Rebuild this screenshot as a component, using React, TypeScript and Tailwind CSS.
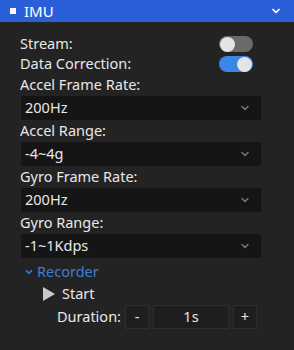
import { ChevronDown } from "lucide-react";

const font = { fontFamily: '"Noto Sans", "Open Sans", sans-serif' };

function Toggle({ on }: { on: boolean }) {
  return (
    <div
      className={`flex h-[16px] w-[34px] items-center rounded-full px-[1px] ${
        on ? "justify-end bg-[#3a86e6]" : "justify-start bg-[#6a6a6a]"
      }`}
    >
      <div className="h-[15px] w-[15px] rounded-full bg-[#e4e4e4]" />
    </div>
  );
}

function Select({ value }: { value: string }) {
  return (
    <div className="flex h-[24px] w-[240px] items-center justify-between rounded-[2px] bg-[#151515] pl-[4px] pr-[10px]">
      <span>{value}</span>
      <ChevronDown className="h-[12px] w-[12px] text-[#777]" strokeWidth={3} />
    </div>
  );
}

const fields = [
  { label: "Accel Frame Rate:", value: "200Hz" },
  { label: "Accel Range:", value: "-4~4g" },
  { label: "Gyro Frame Rate:", value: "200Hz" },
  { label: "Gyro Range:", value: "-1~1Kdps" },
];

export default function App() {
  return (
    <div
      className="h-[350px] w-[294px] bg-[#232323] text-[14.5px] text-[#e8e8e8]"
      style={font}
    >
      <div className="flex h-[22px] items-center bg-[#2b5fd9] pl-[10px] pr-[12px] text-white">
        <div className="h-[6px] w-[6px] bg-white" />
        <span className="ml-[8px] text-[15px]">IMU</span>
        <ChevronDown className="ml-auto h-[12px] w-[12px]" strokeWidth={3.5} />
      </div>
      <div className="pl-[20px] pt-[12px]">
        <div className="flex h-[20px] items-center justify-between pr-[41px]">
          <span>Stream:</span>
          <Toggle on={false} />
        </div>
        <div className="flex h-[20px] items-center justify-between pr-[41px]">
          <span>Data Correction:</span>
          <Toggle on={true} />
        </div>
        {fields.map((f) => (
          <div key={f.label}>
            <div className="flex h-[22px] items-center">{f.label}</div>
            <div className="pl-[1px]">
              <Select value={f.value} />
            </div>
          </div>
        ))}
        <div className="mt-[4px] flex h-[20px] items-center text-[#3b7fd9]">
          <ChevronDown className="ml-[4px] h-[10px] w-[10px]" strokeWidth={4} />
          <span className="ml-[3px]">Recorder</span>
        </div>
        <div className="mt-[2px] flex h-[20px] items-center pl-[23px]">
          <svg width="12" height="14" viewBox="0 0 12 14">
            <path d="M0 0 L12 7 L0 14 Z" fill="#c8c8c8" />
          </svg>
          <span className="ml-[7px]">Start</span>
        </div>
        <div className="mt-[1px] flex h-[24px] items-center pl-[37px]">
          <span className="mr-[4px]">Duration:</span>
          <div className="flex h-[24px] w-[24px] items-center justify-center border border-[#2e2e2e] bg-[#1e1e1e]">
            -
          </div>
          <div className="ml-[4px] flex h-[24px] w-[76px] items-center justify-center border border-[#2e2e2e] bg-[#1e1e1e]">
            1s
          </div>
          <div className="ml-[4px] flex h-[24px] w-[24px] items-center justify-center border border-[#2e2e2e] bg-[#1e1e1e]">
            +
          </div>
        </div>
      </div>
    </div>
  );
}
